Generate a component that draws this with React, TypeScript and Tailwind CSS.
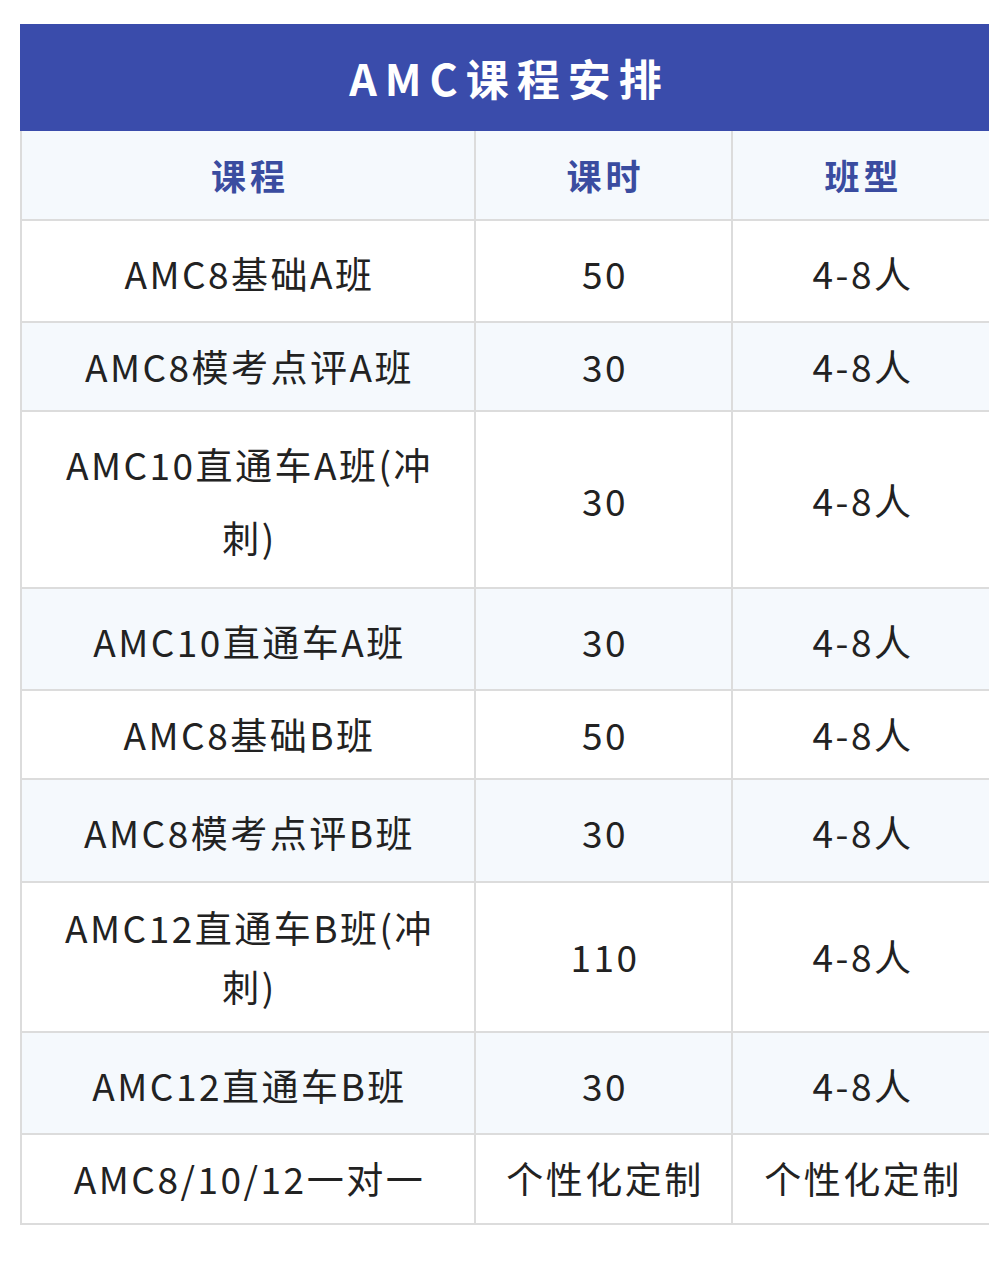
const rows: { name: React.ReactNode; hours: string; size: string; h: string; pad: string; lh: string }[] = [
  { name: "AMC8基础A班", hours: "50", size: "4-8人", h: "h-[102px]", pad: "pt-[5px]", lh: "leading-[1.4]" },
  { name: "AMC8模考点评A班", hours: "30", size: "4-8人", h: "h-[89px]", pad: "", lh: "leading-[1.4]" },
  {
    name: (
      <>
        AMC10直通车A班(冲
        <br />
        刺)
      </>
    ),
    hours: "30",
    size: "4-8人",
    h: "h-[177px]",
    pad: "pt-[3px]",
    lh: "leading-[73px]",
  },
  { name: "AMC10直通车A班", hours: "30", size: "4-8人", h: "h-[102px]", pad: "pt-[5px]", lh: "leading-[1.4]" },
  { name: "AMC8基础B班", hours: "50", size: "4-8人", h: "h-[89px]", pad: "", lh: "leading-[1.4]" },
  { name: "AMC8模考点评B班", hours: "30", size: "4-8人", h: "h-[103px]", pad: "pt-[5px]", lh: "leading-[1.4]" },
  {
    name: (
      <>
        AMC12直通车B班(冲
        <br />
        刺)
      </>
    ),
    hours: "110",
    size: "4-8人",
    h: "h-[150px]",
    pad: "",
    lh: "leading-[59px]",
  },
  { name: "AMC12直通车B班", hours: "30", size: "4-8人", h: "h-[102px]", pad: "pt-[5px]", lh: "leading-[1.4]" },
  { name: "AMC8/10/12一对一", hours: "个性化定制", size: "个性化定制", h: "h-[90px]", pad: "", lh: "leading-[1.4]" },
];

export default function App() {
  return (
    <main className="w-[989px] min-h-[1265px] overflow-hidden bg-white pt-[24px] pl-[20px] font-['Noto_Sans_CJK_SC','Noto_Sans',sans-serif]">
      <div className="w-[975px] border-l-2 border-[#dcdcdc]">
        {/* TITLE */}
        <div className="h-[107px] -ml-[2px] bg-[#3a4cab] flex items-center justify-center pr-[2px]">
          <h1 className="text-white font-bold text-[43px] tracking-[8px] pl-[6px] leading-none">AMC课程安排</h1>
        </div>

        {/* HEAD */}
        <div className="grid grid-cols-[454px_257px_1fr] h-[90px] bg-[#f5f9fd] border-b-2 border-[#dcdcdc] text-[#3a4ca0] font-bold text-[35px] tracking-[4px]">
          <div className="flex items-center justify-center border-r-2 border-[#dcdcdc] pl-[4px]">课程</div>
          <div className="flex items-center justify-center border-r-2 border-[#dcdcdc] pl-[4px]">课时</div>
          <div className="flex items-center justify-center pl-[4px] pr-[5px]">班型</div>
        </div>

        {/* BODY */}
        {rows.map((r, i) => (
          <div
            key={i}
            className={`grid grid-cols-[454px_257px_1fr] ${r.h} border-b-2 border-[#dcdcdc] text-[#222222] text-[37px] tracking-[2.5px] ${
              i % 2 === 1 ? "bg-[#f5f9fd]" : "bg-white"
            }`}
          >
            <div className={`flex items-center justify-center text-center border-r-2 border-[#dcdcdc] pl-[3px] ${r.pad} ${r.lh}`}>
              <span>{r.name}</span>
            </div>
            <div className={`flex items-center justify-center border-r-2 border-[#dcdcdc] pl-[3px] ${r.pad}`}>{r.hours}</div>
            <div className={`flex items-center justify-center pl-[3px] pr-[5px] ${r.pad}`}>{r.size}</div>
          </div>
        ))}
      </div>
    </main>
  );
}
